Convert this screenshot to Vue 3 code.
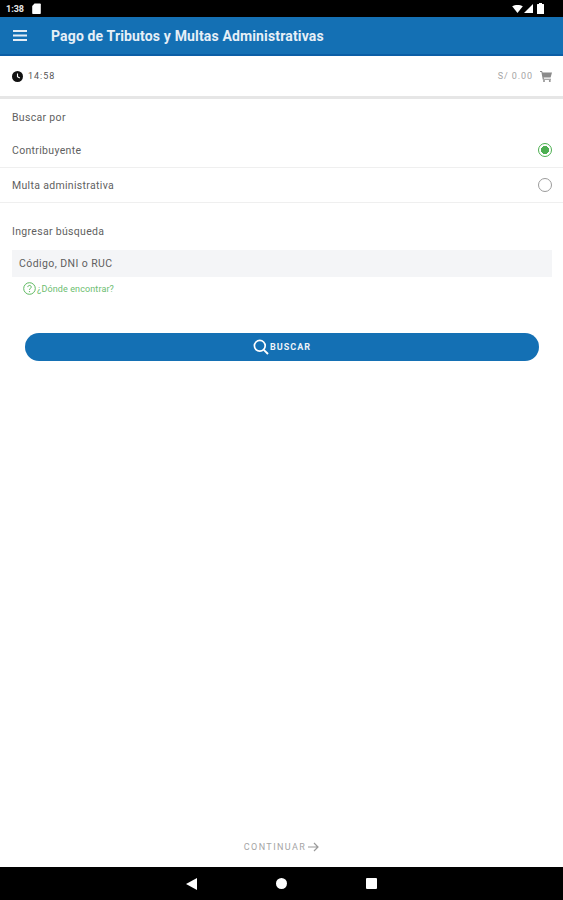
<template>
  <div class="pagina">
    <div class="status-bar">
      <div class="status-izq">
        <span class="hora">1:38</span>
        <svg width="9" height="11" viewBox="0 0 9 11"><path d="M2.5 .5H8a.8.8 0 0 1 .8.8v8.900a.8.8 0 0 1-.8.8H1a.8.8 0 0 1-.8-.8V3z" fill="#fff" /></svg>
      </div>
      <div class="status-der">
        <svg width="11" height="8" viewBox="0 0 12 9"><path d="M0 1.500C3.500-.5 8.500-.5 12 1.500L6 9z" fill="#fff" /></svg>
        <svg width="9" height="9" viewBox="0 0 9 9"><path d="M9 0v9H0z" fill="#fff" /></svg>
        <svg class="bateria" width="7" height="11" viewBox="0 0 7 11"><path d="M2 0h3v1h1.500a.5.5 0 0 1 .5.500V11H0V1.500a.5.5 0 0 1 .5-.5H2z" fill="#fff" /></svg>
      </div>
    </div>

    <header class="app-bar">
      <svg class="menu" width="14" height="11" viewBox="0 0 14 11"><path d="M0 0h14v2H0zM0 4.500h14v2H0zM0 9h14v2H0z" fill="#e4edf5" /></svg>
      <h1>Pago de Tributos y Multas Administrativas</h1>
    </header>

    <div class="info">
      <div class="info-lado">
        <svg width="11" height="11" viewBox="0 0 11 11"><circle cx="5.500" cy="5.500" r="5.500" fill="#111" /><path d="M5.500 2.500v3.200l2.300 1.300" fill="none" stroke="#fff" stroke-width="1.100" /></svg>
        <span class="tiempo">14:58</span>
      </div>
      <div class="info-lado saldo">
        <span>S/ 0.00</span>
        <svg width="12" height="11" viewBox="0 0 12 11"><path d="M0 0h2l.6 1.500H12l-1.400 5H3.600L4 7.800h7v1H2.800L1.400 1H0z" fill="#8a8a8a" /><circle cx="4" cy="10" r="1" fill="#8a8a8a" /><circle cx="9.800" cy="10" r="1" fill="#8a8a8a" /></svg>
      </div>
    </div>

    <main class="contenido">
      <p class="etiqueta buscar-por">Buscar por</p>
      <label v-for="op in opciones" :key="op.valor" class="opcion" @click="tipo = op.valor">
        <span>{{ op.texto }}</span>
        <span class="radio" :class="{ activo: tipo === op.valor }"></span>
      </label>

      <p class="etiqueta ingresar">Ingresar búsqueda</p>
      <div class="campo">Código, DNI o RUC</div>
      <div class="ayuda">
        <svg width="13" height="13" viewBox="0 0 13 13">
          <circle cx="6.500" cy="6.500" r="5.800" fill="none" stroke="#5cb85f" stroke-width="1" />
          <path d="M4.800 5.100c0-2.200 3.400-2.200 3.400-.1 0 1.400-1.700 1.400-1.700 2.900" fill="none" stroke="#5cb85f" stroke-width="1" />
          <circle cx="6.500" cy="9.600" r=".7" fill="#5cb85f" />
        </svg>
        <span>¿Dónde encontrar?</span>
      </div>

      <button class="btn-buscar" type="button">
        <svg width="16" height="16" viewBox="0 0 16 16"><circle cx="6.800" cy="6.800" r="5.400" fill="none" stroke="#fff" stroke-width="1.700" /><path d="M10.800 10.800l4.200 4.200" stroke="#fff" stroke-width="1.900" /></svg>
        <span>BUSCAR</span>
      </button>

      <div class="continuar">
        <span>CONTINUAR</span>
        <svg width="11" height="10" viewBox="0 0 11 10"><path d="M0 5h10M6 1l4 4-4 4" fill="none" stroke="#9a9a9a" stroke-width="1.200" /></svg>
      </div>
    </main>

    <nav class="nav-bar">
      <svg width="11" height="12" viewBox="0 0 11 12"><path d="M11 0v12L0 6z" fill="#fff" /></svg>
      <span class="punto"></span>
      <span class="cuadro"></span>
    </nav>
  </div>
</template>

<script setup>
import { ref } from 'vue'

const tipo = ref('contribuyente')
const opciones = [
  { valor: 'contribuyente', texto: 'Contribuyente' },
  { valor: 'multa', texto: 'Multa administrativa' }
]
</script>

<style>
html, body { margin: 0; background: #fff; }
</style>

<style scoped>
.pagina {
  width: 563px;
  height: 900px;
  display: flex;
  flex-direction: column;
  font-family: Roboto, "Liberation Sans", sans-serif;
  color: #5f5f5f;
  overflow: hidden;
}
.status-bar {
  height: 17px;
  background: #000;
  display: flex;
  justify-content: space-between;
  align-items: center;
  padding: 0 19px 0 6px;
  flex: none;
}
.status-izq, .status-der { display: flex; align-items: center; }
.status-izq { gap: 8px; }
.status-der { gap: 1px; }
.bateria { margin-left: 3px; }
.hora { color: #e8e8e8; font-size: 9px; font-weight: 700; }
.app-bar {
  height: 39px;
  box-sizing: border-box;
  background: #1470b4;
  border-bottom: 2px solid #0b5ea6;
  display: flex;
  align-items: center;
  padding-left: 13px;
  flex: none;
}
.app-bar h1 {
  margin: 0 0 0 24px;
  color: #e6eff7;
  font-size: 14px;
  font-weight: 700;
  letter-spacing: .15px;
}
.info {
  height: 43px;
  box-sizing: border-box;
  border-bottom: 3px solid #e6e6e6;
  display: flex;
  justify-content: space-between;
  align-items: center;
  padding: 0 11px 0 12px;
  flex: none;
}
.info-lado { display: flex; align-items: center; gap: 5px; font-size: 9px; letter-spacing: 1px; }
.tiempo { color: #555; }
.saldo { color: #a5a5a5; gap: 7px; letter-spacing: .9px; }
.contenido {
  flex: 1;
  display: flex;
  flex-direction: column;
  font-size: 10.500px;
  letter-spacing: .32px;
}
.etiqueta { margin: 0; padding-left: 12px; }
.buscar-por { margin-top: 12px; line-height: 13px; }
.opcion {
  height: 35px;
  box-sizing: border-box;
  border-bottom: 1px solid #efefef;
  display: flex;
  justify-content: space-between;
  align-items: center;
  padding: 0 11px 0 12px;
}
.opcion:first-of-type { margin-top: 9px; }
.radio {
  width: 14px;
  height: 14px;
  box-sizing: border-box;
  border: 1.500px solid #9b9b9b;
  border-radius: 50%;
}
.radio.activo {
  border-color: #4caf50;
  background: radial-gradient(circle, #4caf50 0 3.800px, #fff 4.300px);
}
.ingresar { margin-top: 22px; line-height: 13px; }
.campo {
  margin: 12px 11px 0 12px;
  height: 27px;
  background: #f4f5f7;
  display: flex;
  align-items: center;
  padding-left: 7px;
  letter-spacing: .42px;
}
.ayuda {
  display: flex;
  align-items: center;
  gap: 1px;
  margin: 5px 0 0 23px;
  color: #6cbd70;
  font-size: 9px;
  letter-spacing: .12px;
}
.btn-buscar {
  margin: 38px 24px 0 25px;
  height: 28px;
  border: none;
  border-radius: 14px;
  background: #1470b4;
  color: #eef3f8;
  font: 700 9px Roboto, "Liberation Sans", sans-serif;
  letter-spacing: 1px;
  display: flex;
  align-items: center;
  justify-content: center;
  gap: 1px;
  padding: 0;
}
.continuar {
  margin-top: auto;
  height: 41px;
  box-sizing: border-box;
  display: flex;
  align-items: center;
  justify-content: center;
  gap: 2px;
  color: #a5a5a5;
  font-size: 9px;
  letter-spacing: 1.400px;
}
.nav-bar {
  height: 33px;
  background: #000;
  display: flex;
  align-items: center;
  justify-content: center;
  gap: 79px;
  flex: none;
}
.punto { width: 11px; height: 11px; border-radius: 50%; background: #fff; }
.cuadro { width: 11px; height: 11px; border-radius: 1px; background: #fff; }
</style>
